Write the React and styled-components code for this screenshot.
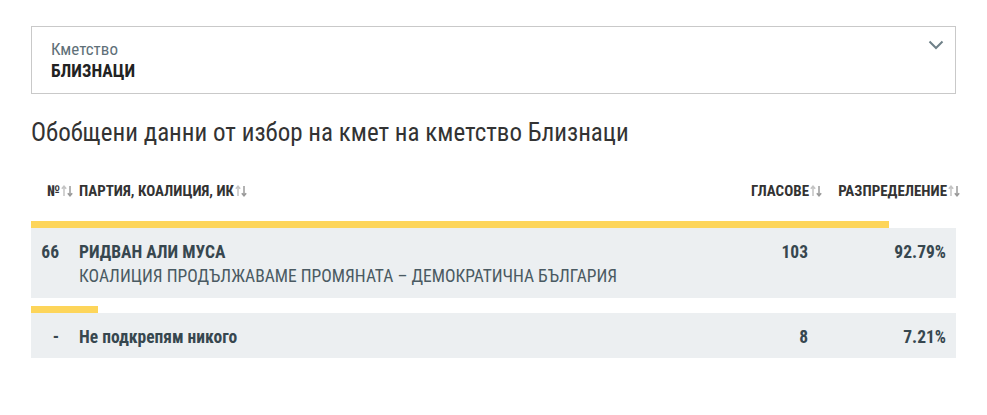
import styled, { createGlobalStyle } from "styled-components";

const GlobalStyle = createGlobalStyle`
  body {
    margin: 0;
    background: #fff;
    font-family: "Roboto Condensed", Roboto, "Noto Sans", sans-serif;
    font-stretch: condensed;
    color: #37474f;
  }
`;

const Page = styled.div`
  padding: 26px 31px 0 31px;
  width: 925px;
`;

const Select = styled.div`
  position: relative;
  height: 68px;
  box-sizing: border-box;
  border: 1px solid #c9c9c9;
  padding: 12px 19px 0 19px;
`;

const SelectLabel = styled.div`
  font-size: 17px;
  line-height: 20px;
  color: #607078;
`;

const SelectValue = styled.div`
  font-size: 17.5px;
  line-height: 25px;
  font-weight: 700;
  color: #222;
`;

const Chevron = styled.svg`
  position: absolute;
  right: 11px;
  top: 13px;
`;

const Title = styled.h2`
  margin: 24px 0 0 0;
  font-size: 25px;
  line-height: 30px;
  font-weight: 400;
  color: #333;
`;

const Grid = styled.div`
  display: grid;
  grid-template-columns: 48px 1fr 90px 126px;
`;

const HeadRow = styled(Grid)`
  margin-top: 31px;
  height: 24px;
  align-items: center;
  font-size: 15px;
  font-weight: 700;
  text-transform: uppercase;
  color: #333;
`;

const HeadCell = styled.div`
  display: flex;
  align-items: center;
  justify-content: ${(p) => (p.$right ? "flex-end" : "flex-start")};
  padding-left: ${(p) => p.$pl || 0}px;
  padding-right: ${(p) => p.$pr || 0}px;
  margin-right: ${(p) => p.$mr || 0}px;
  white-space: nowrap;
`;

const Bar = styled.div`
  height: 7px;
  background: #fdd55a;
  margin-top: ${(p) => p.$mt}px;
`;

const Row = styled(Grid)`
  background: #eceff1;
  min-height: ${(p) => p.$h}px;
  box-sizing: border-box;
  padding-top: 12px;
  font-size: 17.5px;
  line-height: 24px;
`;

const Num = styled.div`
  text-align: right;
  padding-right: 20px;
  font-weight: 700;
`;

const Name = styled.div`
  font-weight: 700;
`;

const Party = styled.div`
  font-weight: 400;
  color: #4a5a62;
`;

const Value = styled.div`
  text-align: right;
  padding-right: ${(p) => p.$pr}px;
  font-weight: 700;
`;

const SortIcon = () => (
  <svg width="12" height="12" viewBox="0 0 12 12" style={{ marginLeft: 1 }}>
    <path d="M3 11V1.5M0.8 3.8L3 1.2L5.2 3.8" stroke="#c4c4c4" strokeWidth="1.5" fill="none" />
    <path d="M9 1V10.5M6.8 8.2L9 10.8L11.2 8.2" stroke="#9a9a9a" strokeWidth="1.5" fill="none" />
  </svg>
);

const rows = [
  { num: "66", name: "РИДВАН АЛИ МУСА", party: "КОАЛИЦИЯ ПРОДЪЛЖАВАМЕ ПРОМЯНАТА – ДЕМОКРАТИЧНА БЪЛГАРИЯ", votes: 103, pct: 92.79 },
  { num: "-", name: "Не подкрепям никого", votes: 8, pct: 7.21 },
];

export default function App() {
  return (
    <>
      <GlobalStyle />
      <Page>
        <Select>
          <SelectLabel>Кметство</SelectLabel>
          <SelectValue>БЛИЗНАЦИ</SelectValue>
          <Chevron width="16" height="10" viewBox="0 0 16 10">
            <path d="M1.5 1.5L8 8L14.5 1.5" stroke="#6f8088" strokeWidth="2" fill="none" />
          </Chevron>
        </Select>

        <Title>Обобщени данни от избор на кмет на кметство Близнаци</Title>

        <HeadRow>
          <HeadCell $pl={16}>№<SortIcon /></HeadCell>
          <HeadCell>Партия, коалиция, ИК<SortIcon /></HeadCell>
          <HeadCell $right $pr={8}>Гласове<SortIcon /></HeadCell>
          <HeadCell $right $mr={-4}>Разпределение<SortIcon /></HeadCell>
        </HeadRow>

        {rows.map((r, i) => (
          <div key={r.num}>
            <Bar $mt={i === 0 ? 18 : 8} style={{ width: `${r.pct}%` }} />
            <Row $h={r.party ? 70 : 45}>
              <Num>{r.num}</Num>
              <div>
                <Name>{r.name}</Name>
                {r.party && <Party>{r.party}</Party>}
              </div>
              <Value $pr={22}>{r.votes}</Value>
              <Value $pr={10}>{r.pct.toFixed(2)}%</Value>
            </Row>
          </div>
        ))}
      </Page>
    </>
  );
}
